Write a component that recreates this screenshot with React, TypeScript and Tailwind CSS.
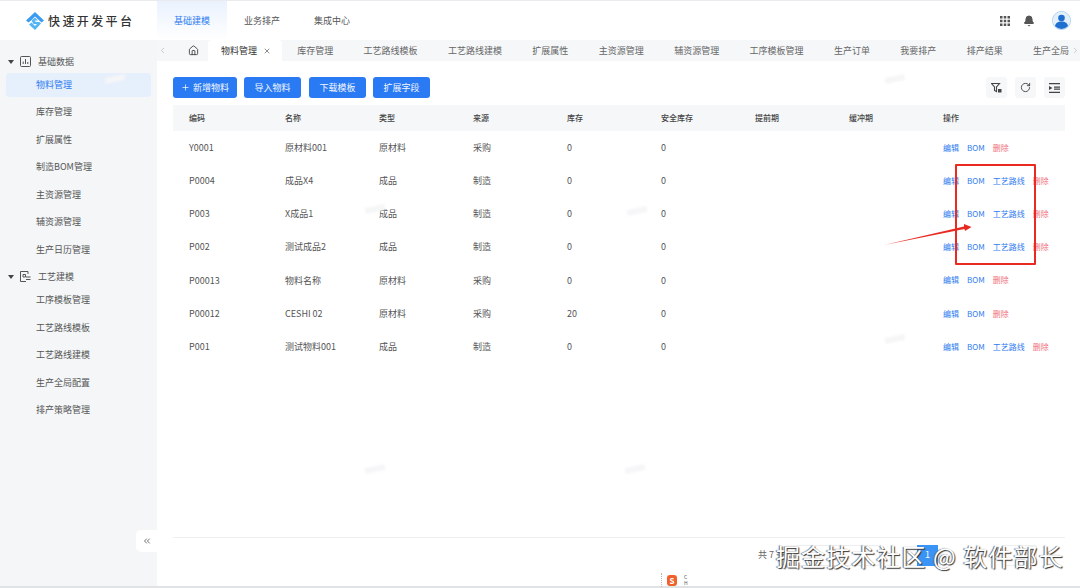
import { Bell, ChevronLeft, ChevronRight, ChevronsLeft, House, Plus, RotateCw, X } from "lucide-react";

interface Row {
  code: string;
  name: string;
  type: string;
  source: string;
  stock: string;
  route: boolean;
}

const rows: Row[] = [
  { code: "Y0001", name: "原材料001", type: "原材料", source: "采购", stock: "0", route: false },
  { code: "P0004", name: "成品X4", type: "成品", source: "制造", stock: "0", route: true },
  { code: "P003", name: "X成品1", type: "成品", source: "制造", stock: "0", route: true },
  { code: "P002", name: "测试成品2", type: "成品", source: "制造", stock: "0", route: true },
  { code: "P00013", name: "物料名称", type: "原材料", source: "采购", stock: "0", route: false },
  { code: "P00012", name: "CESHI 02", type: "原材料", source: "采购", stock: "20", route: false },
  { code: "P001", name: "测试物料001", type: "成品", source: "制造", stock: "0", route: true },
];

const tabs = ["库存管理", "工艺路线模板", "工艺路线建模", "扩展属性", "主资源管理", "辅资源管理", "工序模板管理", "生产订单", "我要排产", "排产结果", "生产全局"];
const headers = ["名称", "类型", "来源", "库存", "安全库存", "提前期", "缓冲期"];
const menuOne = ["库存管理", "扩展属性", "制造BOM管理", "主资源管理", "辅资源管理", "生产日历管理"];
const menuTwo = ["工序模板管理", "工艺路线模板", "工艺路线建模", "生产全局配置", "排产策略管理"];
// the page's watermark is too faint to read, so it is only a pale smudge here
const marks = [
  "left-[105px] top-[75px]", "left-[365px] top-[205px]", "left-[627px] top-[207px]", "left-[105px] top-[335px]",
  "left-[365px] top-[465px]", "left-[625px] top-[465px]", "left-[885px] top-[335px]", "left-[105px] top-[205px]",
  "left-[885px] top-[75px]",
];

function Logo() {
  return (
    <svg width="20" height="18" viewBox="0 0 20 18">
      <path d="M10 0 19 8.500 16.500 10.500 10 4.500 6 8.500 3.500 10.500 1 8.500Z" fill="#3b9bf0" />
      <path d="M6.500 8.500 10 5.500 13 8.500H9.500L11 10H14.500L16 11.500 10 18 4 12.500 6.500 10.500 10 14 12 12H8.500Z" fill="#55b4f5" />
    </svg>
  );
}

function Avatar() {
  return (
    <div className="w-[19px] h-[19px] rounded-full border border-[#a9cdf2] bg-white overflow-hidden flex items-center justify-center">
      <svg width="17" height="17" viewBox="0 0 17 17">
        <circle cx="8.500" cy="8.500" r="8.500" fill="#e3effb" />
        <circle cx="8.500" cy="6" r="3.300" fill="#1e6fd0" />
        <path d="M2 15c0-4 3-5.500 6.500-5.500S15 11 15 15l-2 2H4Z" fill="#1e6fd0" />
      </svg>
    </div>
  );
}

function Apps() {
  return (
    <svg width="10" height="10" viewBox="0 0 10 10" fill="#555">
      <path d="M0 0h2.500v2.500H0ZM3.750 0h2.500v2.500h-2.500ZM7.500 0H10v2.500H7.500ZM0 3.750h2.500v2.500H0ZM3.750 3.750h2.500v2.500h-2.500ZM7.500 3.750H10v2.500H7.500ZM0 7.500h2.500V10H0ZM3.750 7.500h2.500V10h-2.500ZM7.500 7.500H10V10H7.500Z" />
    </svg>
  );
}

function FilterLines() {
  return (
    <svg width="11" height="11" viewBox="0 0 11 11" fill="none" stroke="#444" strokeWidth="1.100">
      <path d="M.5 1.500h8L5.500 5v4.500L3.500 8.500V5Z" />
      <path d="M7 7h3.500v3.500H7Z" fill="#444" stroke="none" />
    </svg>
  );
}

function Density() {
  return (
    <svg width="11" height="10" viewBox="0 0 11 10" fill="#444">
      <path d="M0 0h11v1.200H0ZM0 3l3.500 2L0 7ZM5 3.500h6v1.200H5ZM5 5.500h6v1.200H5ZM0 8.800h11V10H0Z" />
    </svg>
  );
}

function Chart() {
  return (
    <svg width="11" height="11" viewBox="0 0 11 11" fill="none" stroke="#555" strokeWidth="1">
      <rect x="0.500" y="0.500" width="10" height="10" rx="1" />
      <path d="M3.200 8V5.500M5.500 8V3M7.800 8V6" />
    </svg>
  );
}

function Craft() {
  return (
    <svg width="11" height="11" viewBox="0 0 11 11" fill="none" stroke="#555" strokeWidth="1">
      <path d="M6 10.500H.5V.5H8V3" />
      <path d="M3 3.500h2.500v2.500H3ZM6 6h4.500M6 8.500h4.500" />
    </svg>
  );
}

function Caret() {
  return <span className="w-0 h-0 border-x-[3px] border-x-transparent border-t-[4px] border-t-[#444]" />;
}

function Cell({ children }: { children?: React.ReactNode }) {
  return <td className="pl-4 text-[9px] text-[#555] whitespace-nowrap">{children}</td>;
}

export default function App() {
  return (
    <div className="relative w-[1080px] h-[588px] overflow-hidden bg-white border-t border-[#e9ebee] flex flex-col font-['Noto_Sans_CJK_SC','Noto_Sans',sans-serif]">
      <header className="h-[39px] shrink-0 flex items-stretch">
        <div className="w-[157px] flex items-center pl-[25px] gap-[3px]">
          <Logo />
          <span className="text-[12px] font-medium tracking-[2.400px] text-[#333]">快速开发平台</span>
        </div>
        <nav className="flex text-[9px] text-[#555]">
          <div className="w-[70px] flex items-center justify-center text-[#2f7cf0] bg-gradient-to-b from-[#eaf2fe] to-white">基础建模</div>
          <div className="w-[70px] flex items-center justify-center">业务排产</div>
          <div className="w-[70px] flex items-center justify-center">集成中心</div>
        </nav>
        <div className="ml-auto flex items-center pr-[9px]">
          <div className="mr-[13px]"><Apps /></div>
          <Bell size={12} className="text-[#555] fill-[#555] mr-[17px]" />
          <Avatar />
        </div>
      </header>

      <div className="flex flex-1 min-h-0">
        <aside className="relative w-[157px] shrink-0 bg-[#f4f6f8] pt-[8px] text-[9px] text-[#555]">
          <div className="h-[27px] flex items-center pl-[8px] gap-[6px]">
            <Caret />
            <Chart />
            <span className="ml-[1px]">基础数据</span>
          </div>
          <div className="mx-[6px] h-[24px] -mt-[2px] flex items-center pl-[30px] rounded-[4px] bg-[#e6effc] text-[#2f7cf0]">物料管理</div>
          <div className="mt-[1px]">
            {menuOne.map((m) => (
              <div key={m} className="h-[27.500px] flex items-center pl-[36px]">{m}</div>
            ))}
          </div>
          <div className="h-[27px] flex items-center pl-[8px] gap-[6px]">
            <Caret />
            <Craft />
            <span className="ml-[1px]">工艺建模</span>
          </div>
          <div className="-mt-[4px]">
            {menuTwo.map((m) => (
              <div key={m} className="h-[27.500px] flex items-center pl-[36px]">{m}</div>
            ))}
          </div>
          <button className="absolute right-0 bottom-[34px] w-[21px] h-[22px] rounded-l-[5px] bg-white flex items-center justify-center text-[#555]">
            <ChevronsLeft size={10} />
          </button>
        </aside>

        <main className="flex-1 min-w-0 flex flex-col">
          <div className="h-[21px] shrink-0 bg-[#f5f7f9] flex items-center overflow-hidden text-[9px] text-[#666] relative">
            <ChevronLeft size={9} className="ml-[1px] text-[#bbb] shrink-0" />
            <House size={11} className="ml-[21px] mr-[9px] text-[#444] shrink-0" />
            <div className="h-full w-[74px] shrink-0 bg-white rounded-t-[4px] flex items-center pl-[13px] text-[#333]">
              物料管理
              <X size={8} className="ml-[6px] text-[#555]" />
            </div>
            {tabs.map((t) => (
              <span key={t} className="px-[15.200px] shrink-0 whitespace-nowrap">{t}</span>
            ))}
            <div className="absolute right-0 top-0 h-full w-[9px] bg-[#f5f7f9] flex items-center justify-center">
              <ChevronRight size={9} className="text-[#bbb]" />
            </div>
          </div>

          <div className="flex-1 flex flex-col pl-[16px] pr-[15px] pt-[16px]">
            <div className="flex items-center h-[21px] text-[9px] text-[#f2f7ff]">
              <button className="w-[64px] h-full mr-[7px] rounded-[3px] bg-[#2a7bf3] flex items-center justify-center gap-[3px]">
                <Plus size={9} />
                新增物料
              </button>
              <button className="w-[57px] h-full mr-[8px] rounded-[3px] bg-[#2a7bf3]">导入物料</button>
              <button className="w-[57px] h-full mr-[7px] rounded-[3px] bg-[#2a7bf3]">下载模板</button>
              <button className="w-[57px] h-full rounded-[3px] bg-[#2a7bf3]">扩展字段</button>
              <div className="ml-auto flex gap-[8px] text-[#444]">
                <div className="w-[21px] h-[21px] rounded-[3px] bg-[#f5f7f9] flex items-center justify-center"><FilterLines /></div>
                <div className="w-[21px] h-[21px] rounded-[3px] bg-[#f5f7f9] flex items-center justify-center"><RotateCw size={11} /></div>
                <div className="w-[21px] h-[21px] rounded-[3px] bg-[#f5f7f9] flex items-center justify-center"><Density /></div>
              </div>
            </div>

            <table className="mt-[7px] w-full table-fixed border-collapse">
              <thead>
                <tr className="h-[26px] bg-[#f5f7f9]">
                  <th className="w-[96px] pl-4 text-left text-[8px] font-medium text-[#444]">编码</th>
                  {headers.map((h) => (
                    <th key={h} className="w-[94px] pl-4 text-left text-[8px] font-medium text-[#444]">{h}</th>
                  ))}
                  <th className="pl-4 text-left text-[8px] font-medium text-[#444]">操作</th>
                </tr>
              </thead>
              <tbody>
                {rows.map((r) => (
                  <tr key={r.code} className="h-[33.200px]">
                    <Cell>{r.code}</Cell>
                    <Cell>{r.name}</Cell>
                    <Cell>{r.type}</Cell>
                    <Cell>{r.source}</Cell>
                    <Cell>{r.stock}</Cell>
                    <Cell>0</Cell>
                    <Cell />
                    <Cell />
                    <td className="pl-4 whitespace-nowrap">
                      <div className="flex gap-[8px] text-[8px] text-[#2f7cf0]">
                        <span>编辑</span>
                        <span>BOM</span>
                        {r.route && <span>工艺路线</span>}
                        <span className="text-[#f0707c]">删除</span>
                      </div>
                    </td>
                  </tr>
                ))}
              </tbody>
            </table>

            {/* pagination, mostly hidden by the site watermark in the reference */}
            <div className="mt-auto mb-[14px] h-[35px] border-t border-[#eeeff1] flex items-center text-[9px] text-[#666]">
              <span className="ml-[585px] w-[27px] whitespace-nowrap">共 7 条</span>
              <div className="ml-[11px] w-[84px] h-[21px] border border-[#eceef0] rounded-[2px]" />
              <div className="ml-[37px] w-[21px] h-[21px] bg-[#3a94f5] text-white flex items-center justify-center">1</div>
              <div className="ml-[63px] w-[36px] h-[21px] border border-[#eceef0] rounded-[2px]" />
            </div>
          </div>
        </main>
      </div>

      <div className="h-[2px] shrink-0 bg-[#dfe3e6]" />

      {marks.map((m) => (
        <span key={m} className={`absolute ${m} -rotate-12 w-[20px] h-[6px] blur-[1px] bg-[#f5f6f7]`} />
      ))}

      {/* annotations drawn on the screenshot */}
      <div className="absolute left-[955px] top-[163px] w-[81px] h-[101px] border-2 border-[#ea2a20] rounded-[1px]" />
      <svg className="absolute left-[880px] top-[219px]" width="96" height="30" viewBox="0 0 96 30">
        <path d="M4 25 84 6.500 84 4 91.500 7 85 11 84.500 9Z" fill="#ea2a20" />
      </svg>
      <div className="absolute left-[776px] top-[537px] text-[24px] leading-[36px] tracking-[1.100px] text-white whitespace-nowrap [text-shadow:1px_1px_1px_#333,-1px_0_1px_#666]">
        掘金技术社区 @ 软件部长
      </div>
      <div className="absolute left-[661px] top-[572px] h-[14px] pl-[5px] border-l border-dotted border-[#bbb] flex items-center gap-[7px]">
        <span className="w-[10px] h-[11px] rounded-[3px] bg-[#f0602a] text-white text-[8px] leading-[11px] text-center font-bold">S</span>
        <span className="text-[5px] leading-[6px] text-[#555]">C<br />H</span>
      </div>
    </div>
  );
}
